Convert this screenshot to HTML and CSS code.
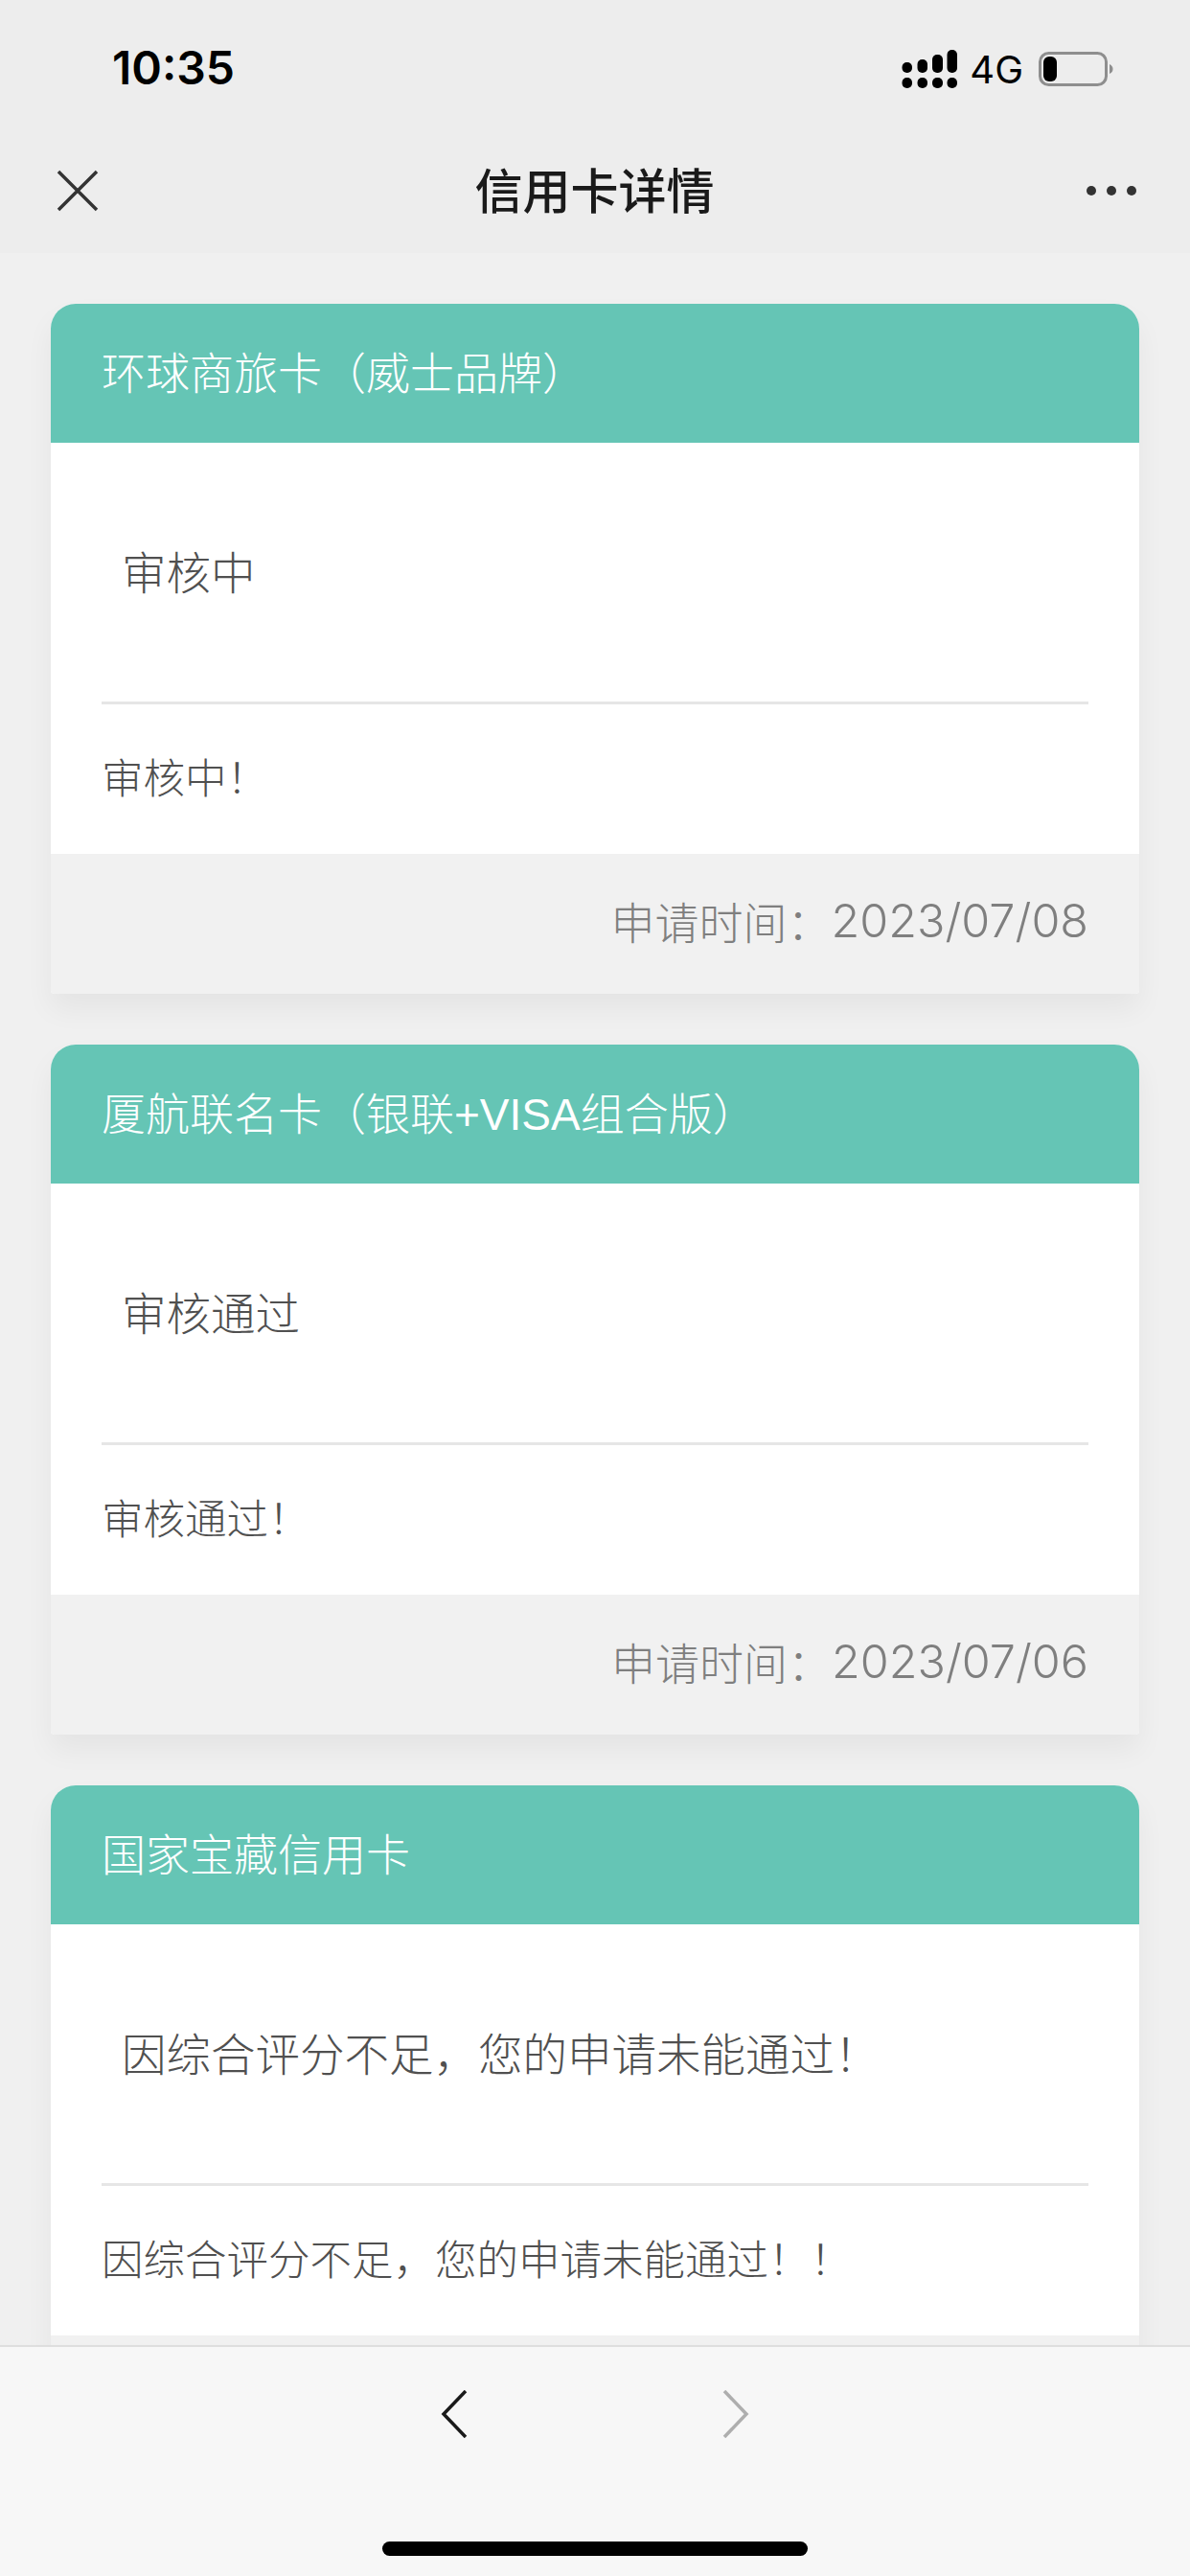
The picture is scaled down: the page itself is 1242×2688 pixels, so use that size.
FILE: index.html
```html
<!DOCTYPE html>
<html lang="zh-CN">
<head>
<meta charset="utf-8">
<title>信用卡详情</title>
<link rel="stylesheet" href="styles.css">
</head>
<body>
<div class="app">
  <div class="top">
    <div class="status">
      <span class="time">10:35</span>
      <div class="status-right">
        <svg class="signal" width="58" height="42" viewBox="0 0 58 42">
          <rect x="0.500" y="14" width="10.500" height="11" rx="5"/>
          <rect x="16.500" y="11" width="10.500" height="14" rx="5"/>
          <rect x="32" y="6" width="11" height="19" rx="5"/>
          <rect x="47.500" y="1" width="10.500" height="24" rx="5"/>
          <rect x="0.500" y="30" width="10.500" height="11" rx="5"/>
          <rect x="16.500" y="30" width="10.500" height="11" rx="5"/>
          <rect x="32" y="30" width="11" height="11" rx="5"/>
          <rect x="47.500" y="30" width="10.500" height="11" rx="5"/>
        </svg>
        <span class="net">4G</span>
        <svg class="battery" width="78" height="36" viewBox="0 0 78 36">
          <rect x="1.500" y="1.500" width="69" height="33" rx="9" fill="none" stroke="#8e8e8e" stroke-width="3"/>
          <rect x="5" y="5" width="14" height="26" rx="6" fill="#000"/>
          <path d="M74 13c2.500 1 3.500 3 3.500 5s-1 4-3.500 5z" fill="#8e8e8e"/>
        </svg>
      </div>
    </div>
    <div class="nav">
      <svg class="ico" width="44" height="44" viewBox="0 0 44 44">
        <path d="M2 2L42 42M42 2L2 42" fill="none" stroke="#333" stroke-width="3.500"/>
      </svg>
      <div class="nav-title">信用卡详情</div>
      <svg class="ico" width="54" height="12" viewBox="0 0 54 12">
        <circle cx="6" cy="6" r="5" fill="#333"/>
        <circle cx="27" cy="6" r="5" fill="#333"/>
        <circle cx="48" cy="6" r="5" fill="#333"/>
      </svg>
    </div>
  </div>

  <div class="list">
    <div class="card">
      <div class="card-head">环球商旅卡（威士品牌）</div>
      <div class="card-status">审核中</div>
      <div class="card-msg">审核中！</div>
      <div class="card-foot">申请时间：<span class="date">2023/07/08</span></div>
    </div>
    <div class="card">
      <div class="card-head">厦航联名卡（银联+VISA组合版）</div>
      <div class="card-status">审核通过</div>
      <div class="card-msg">审核通过！</div>
      <div class="card-foot">申请时间：<span class="date">2023/07/06</span></div>
    </div>
    <div class="card">
      <div class="card-head">国家宝藏信用卡</div>
      <div class="card-status">因综合评分不足，您的申请未能通过！</div>
      <div class="card-msg">因综合评分不足，您的申请未能通过！！</div>
      <div class="card-foot"></div>
    </div>
  </div>

  <div class="bottom">
    <div class="arrows">
      <svg width="28" height="50" viewBox="0 0 28 50">
        <path d="M26 1L3 25L26 49" fill="none" stroke="#1a1a1a" stroke-width="3.500"/>
      </svg>
      <svg width="28" height="50" viewBox="0 0 28 50">
        <path d="M2 1L25 25L2 49" fill="none" stroke="#aeaeae" stroke-width="3.500"/>
      </svg>
    </div>
    <div class="home-bar"></div>
  </div>
</div>
</body>
</html>
```

FILE: styles.css
```css
* {
  box-sizing: border-box;
}
html, body {
  margin: 0;
  padding: 0;
}
body {
  font-family: "Liberation Sans", "Noto Sans CJK SC", sans-serif;
  background: #f0f0f0;
}
.app {
  width: 1242px;
  height: 2688px;
  display: flex;
  flex-direction: column;
  overflow: hidden;
}

/* top bars */
.top {
  height: 264px;
  flex: none;
  background: #ededed;
}
.status {
  height: 140px;
  padding: 48px 80px 0 117px;
  display: flex;
  justify-content: space-between;
  align-items: flex-start;
}
.time {
  font-family: Inter, "Liberation Sans", sans-serif;
  font-size: 48px;
  line-height: 46px;
  font-weight: 600;
  color: #000;
}
.status-right {
  display: flex;
  align-items: center;
  margin-top: 1px;
}
.net {
  font-family: Inter, "Liberation Sans", sans-serif;
  font-size: 40px;
  line-height: 42px;
  margin: 3px 16px 0 13px;
  color: #000;
}
.nav {
  height: 124px;
  padding: 0 55px 6px 59px;
  display: flex;
  align-items: center;
  justify-content: space-between;
}
.nav-title {
  font-size: 50px;
  font-weight: 500;
  color: #1a1a1a;
  margin-left: 5px;
  padding-bottom: 6px;
}
.ico {
  display: block;
}

/* cards */
.list {
  flex: 1;
  min-height: 0;
  overflow: hidden;
  padding: 53px 53px 0;
}
.card {
  background: #fff;
  border-radius: 26px 26px 4px 4px;
  margin-bottom: 53px;
  box-shadow: 0 16px 30px rgba(0, 0, 0, 0.05);
  overflow: hidden;
}
.card-head {
  height: 145px;
  padding: 0 53px 8px;
  display: flex;
  align-items: center;
  background: #65c5b5;
  color: #fff;
  font-size: 46px;
  font-weight: 300;
}
.card-status {
  height: 273px;
  margin: 0 53px;
  padding: 0 21px 5px;
  display: flex;
  align-items: center;
  border-bottom: 3px solid #e6e6e6;
  color: #505050;
  font-size: 46.500px;
  font-weight: 300;
}
.card-msg {
  height: 156px;
  padding: 0 53px 8px;
  display: flex;
  align-items: center;
  color: #505050;
  font-size: 43.500px;
  font-weight: 300;
}
.card-foot {
  height: 146px;
  padding: 0 53px 8px;
  display: flex;
  align-items: center;
  justify-content: flex-end;
  background: #f1f1f1;
  color: #7f7f7f;
  font-size: 46px;
  font-weight: 300;
}
.date {
  font-family: Inter, "Liberation Sans", sans-serif;
  font-size: 48.500px;
}

/* bottom toolbar */
.bottom {
  height: 241px;
  flex: none;
  background: #f7f7f7;
  border-top: 2px solid #dedede;
  display: flex;
  flex-direction: column;
  align-items: center;
}
.arrows {
  display: flex;
  gap: 266px;
  margin-top: 45px;
  height: 50px;
}
.arrows svg {
  display: block;
}
.home-bar {
  width: 444px;
  height: 15px;
  margin-top: 108px;
  border-radius: 8px;
  background: #000;
}
```
